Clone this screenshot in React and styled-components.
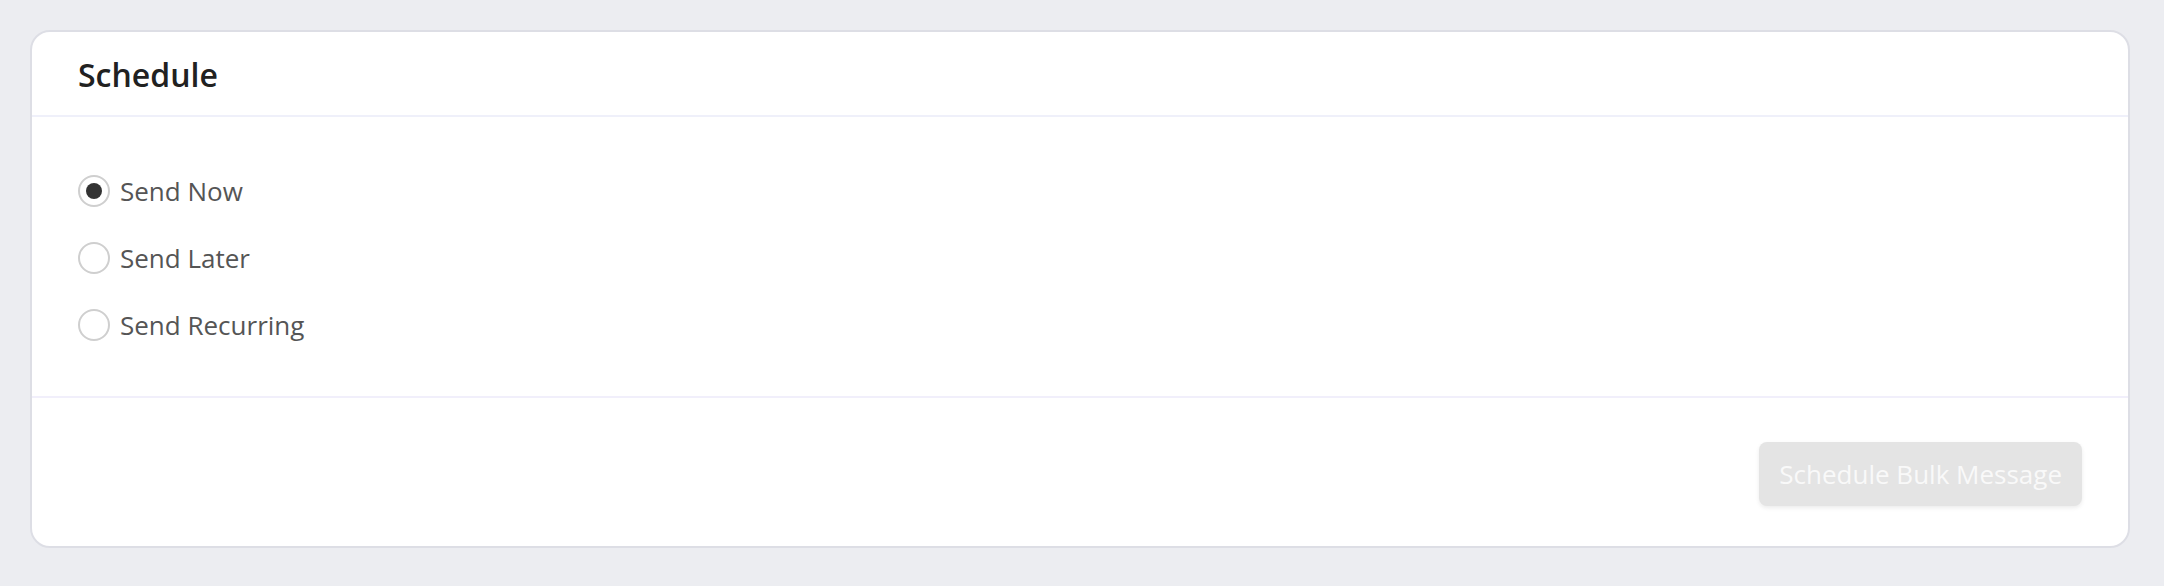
import React, { useState } from "react";
import styled, { createGlobalStyle } from "styled-components";

const Global = createGlobalStyle`
  html, body { margin: 0; padding: 0; background: #ecedf1; }
  body { font-family: "Open Sans", "Liberation Sans", sans-serif; }
  * { box-sizing: border-box; }
`;

const Page = styled.div`
  padding: 30px 34px 42px 30px;
  background: #ecedf1;
  min-height: 586px;
`;

const Card = styled.section`
  background: #ffffff;
  border: 2px solid #dddee5;
  border-radius: 20px;
  display: flex;
  flex-direction: column;
`;

const Header = styled.header`
  height: 85px;
  display: flex;
  align-items: center;
  padding: 0 46px;
  border-bottom: 2px solid #eff0fa;
`;

const Title = styled.h2`
  margin: 0;
  font-size: 32px;
  font-weight: 600;
  color: #212121;
  line-height: 1;
  padding-top: 2px;
`;

const Body = styled.div`
  padding: 40px 46px 38px;
  display: flex;
  flex-direction: column;
  border-bottom: 2px solid #f1effb;
`;

const Option = styled.label`
  display: flex;
  align-items: center;
  gap: 10px;
  height: 67px;
  cursor: pointer;
  font-size: 26px;
  color: #555555;
`;

const Circle = styled.span`
  width: 32px;
  height: 32px;
  border-radius: 50%;
  border: 2px solid #cfcfcf;
  display: flex;
  align-items: center;
  justify-content: center;
  flex-shrink: 0;
  background: #fff;

  &::after {
    content: "";
    width: 16px;
    height: 16px;
    border-radius: 50%;
    background: #333333;
    display: ${(p) => (p.$checked ? "block" : "none")};
  }
`;

const Footer = styled.footer`
  display: flex;
  justify-content: flex-end;
  padding: 44px 46px 40px;
`;

const Button = styled.button`
  font-family: "Open Sans", "Liberation Sans", sans-serif;
  font-size: 26px;
  line-height: 32px;
  padding: 16px 20px;
  height: 64px;
  border: none;
  border-radius: 8px;
  background: #e4e4e4;
  color: #f9f9f9;
  box-shadow: 0 2px 4px rgba(0, 0, 0, 0.08);
  cursor: not-allowed;
`;

const options = ["Send Now", "Send Later", "Send Recurring"];

export default function App() {
  const [sel, setSel] = useState(0);
  return (
    <>
      <Global />
      <Page>
        <Card>
          <Header>
            <Title>Schedule</Title>
          </Header>
          <Body>
            {options.map((o, i) => (
              <Option key={o} onClick={() => setSel(i)}>
                <Circle $checked={sel === i} />
                {o}
              </Option>
            ))}
          </Body>
          <Footer>
            <Button disabled>Schedule Bulk Message</Button>
          </Footer>
        </Card>
      </Page>
    </>
  );
}
